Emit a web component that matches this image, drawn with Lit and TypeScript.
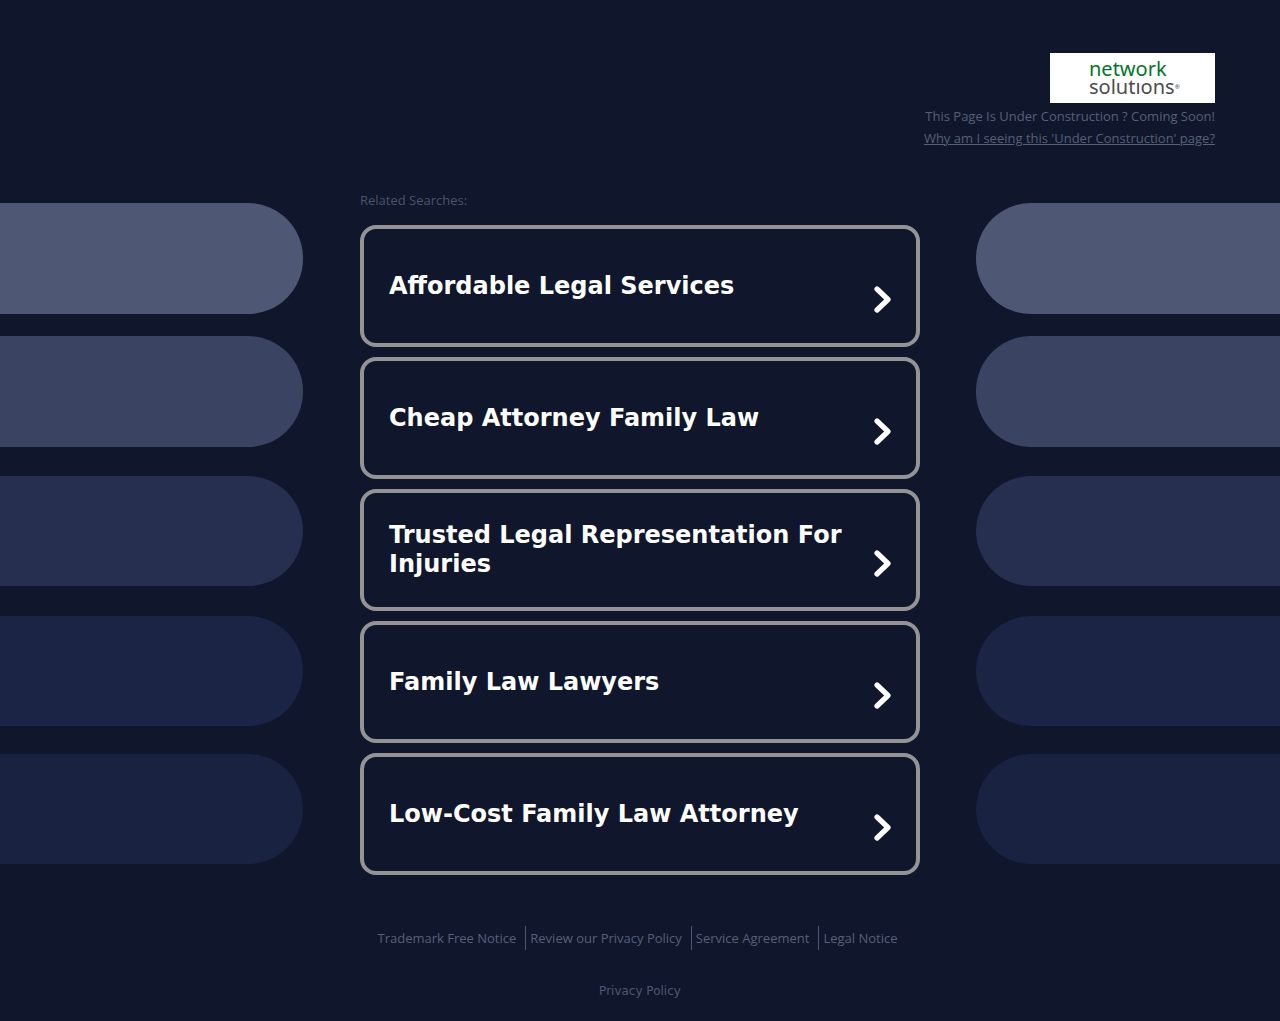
import { LitElement, html, css } from "lit";
import { customElement } from "lit/decorators.js";

const SEARCHES = [
  "Affordable Legal Services",
  "Cheap Attorney Family Law",
  "Trusted Legal Representation For Injuries",
  "Family Law Lawyers",
  "Low-Cost Family Law Attorney",
];

const NOTICES = ["Trademark Free Notice", "Review our Privacy Policy", "Service Agreement", "Legal Notice"];

@customElement("search-card")
class SearchCard extends LitElement {
  static properties = { label: { type: String } };
  declare label: string;

  static styles = css`
    :host {
      display: block;
    }
    .card {
      display: flex;
      align-items: center;
      gap: 20px;
      box-sizing: border-box;
      min-height: 122px;
      padding: 0 25px;
      border: 4px solid #949496;
      border-radius: 16px;
      color: #fff;
      font: bold 24px/29px "DejaVu Sans", sans-serif;
      text-decoration: none;
    }
    .label {
      flex: 1;
    }
    .chevron {
      align-self: flex-end;
      flex: none;
      width: 18px;
      height: 27px;
      margin-bottom: 30px;
    }
  `;

  render() {
    return html`
      <a class="card" href="#">
        <span class="label">${this.label}</span>
        <svg class="chevron" viewBox="0 0 18 27" aria-hidden="true">
          <path d="M4 3 15 13.500 4 24" fill="none" stroke="#fff" stroke-width="5.200" stroke-linecap="round" stroke-linejoin="round" />
        </svg>
      </a>
    `;
  }
}

@customElement("app-root")
class AppRoot extends LitElement {
  static styles = css`
    :host {
      display: block;
      min-height: 100vh;
      background: #10162b;
      color: #566079;
      font: 600 13px/22px "Open Sans", sans-serif;
      font-weight: 500;
      overflow-x: hidden;
    }
    a {
      color: inherit;
    }
    .header {
      display: flex;
      flex-direction: column;
      align-items: flex-end;
      padding: 53px 65px 0;
    }
    .logo {
      display: flex;
      flex-direction: column;
      box-sizing: border-box;
      width: 165px;
      height: 50px;
      margin-bottom: 2px;
      padding: 7px 0 0 39px;
      background: #fff;
      color: #4c4c4e;
      font: 400 20px/18px "Noto Sans", sans-serif;
    }
    .network {
      color: #047428;
    }
    .solutions {
      display: flex;
    }
    .mark {
      font-size: 6px;
    }
    .main {
      display: grid;
      grid-template-columns: 1fr minmax(0, 560px) 1fr;
      margin-top: 40px;
    }
    .left {
      padding-right: 57px;
    }
    .right {
      padding-left: 56px;
    }
    .pill {
      height: 110px;
      margin-top: 30px;
    }
    .left .pill {
      border-radius: 0 55px 55px 0;
    }
    .right .pill {
      border-radius: 55px 0 0 55px;
    }
    .tone1 {
      height: 111px;
      margin-top: 14px;
      background: #4e5773;
    }
    .tone2 {
      height: 111px;
      margin-top: 22px;
      background: #3b4362;
    }
    .tone3 {
      margin-top: 29px;
      background: #262f4f;
    }
    .tone4 {
      background: #1b2444;
    }
    .tone5 {
      margin-top: 28px;
      background: #192240;
    }
    .title {
      margin: 0 0 14px;
      color: #4a546c;
      font-size: 13px;
      font-weight: 500;
    }
    .cards {
      display: flex;
      flex-direction: column;
      gap: 10px;
    }
    .footer {
      display: flex;
      flex-direction: column;
      align-items: center;
      gap: 30px;
      padding: 51px 0 20px;
    }
    .notices {
      display: flex;
      line-height: 24px;
    }
    .notice {
      padding: 0 9px 0 4px;
      text-decoration: none;
    }
    .notice + .notice {
      border-left: 1px solid #4e5772;
    }
    .privacy {
      color: #4e5772;
      font: 400 12px/22px "DejaVu Sans", sans-serif;
      text-decoration: none;
    }
  `;

  private pills(side: string) {
    return html`<div class=${side} aria-hidden="true">
      ${[1, 2, 3, 4, 5].map((n) => html`<div class="pill tone${n}"></div>`)}
    </div>`;
  }

  render() {
    return html`
      <header class="header">
        <div class="logo">
          <span class="network">network</span>
          <span class="solutions">solutıons<span class="mark">®</span></span>
        </div>
        <span>This Page Is Under Construction ? Coming Soon!</span>
        <a href="#">Why am I seeing this 'Under Construction' page?</a>
      </header>
      <main class="main">
        ${this.pills("left")}
        <section>
          <h1 class="title">Related Searches:</h1>
          <nav class="cards">
            ${SEARCHES.map((label) => html`<search-card .label=${label}></search-card>`)}
          </nav>
        </section>
        ${this.pills("right")}
      </main>
      <footer class="footer">
        <nav class="notices">${NOTICES.map((text) => html`<a class="notice" href="#">${text}</a>`)}</nav>
        <a class="privacy" href="#">Privacy Policy</a>
      </footer>
    `;
  }
}
